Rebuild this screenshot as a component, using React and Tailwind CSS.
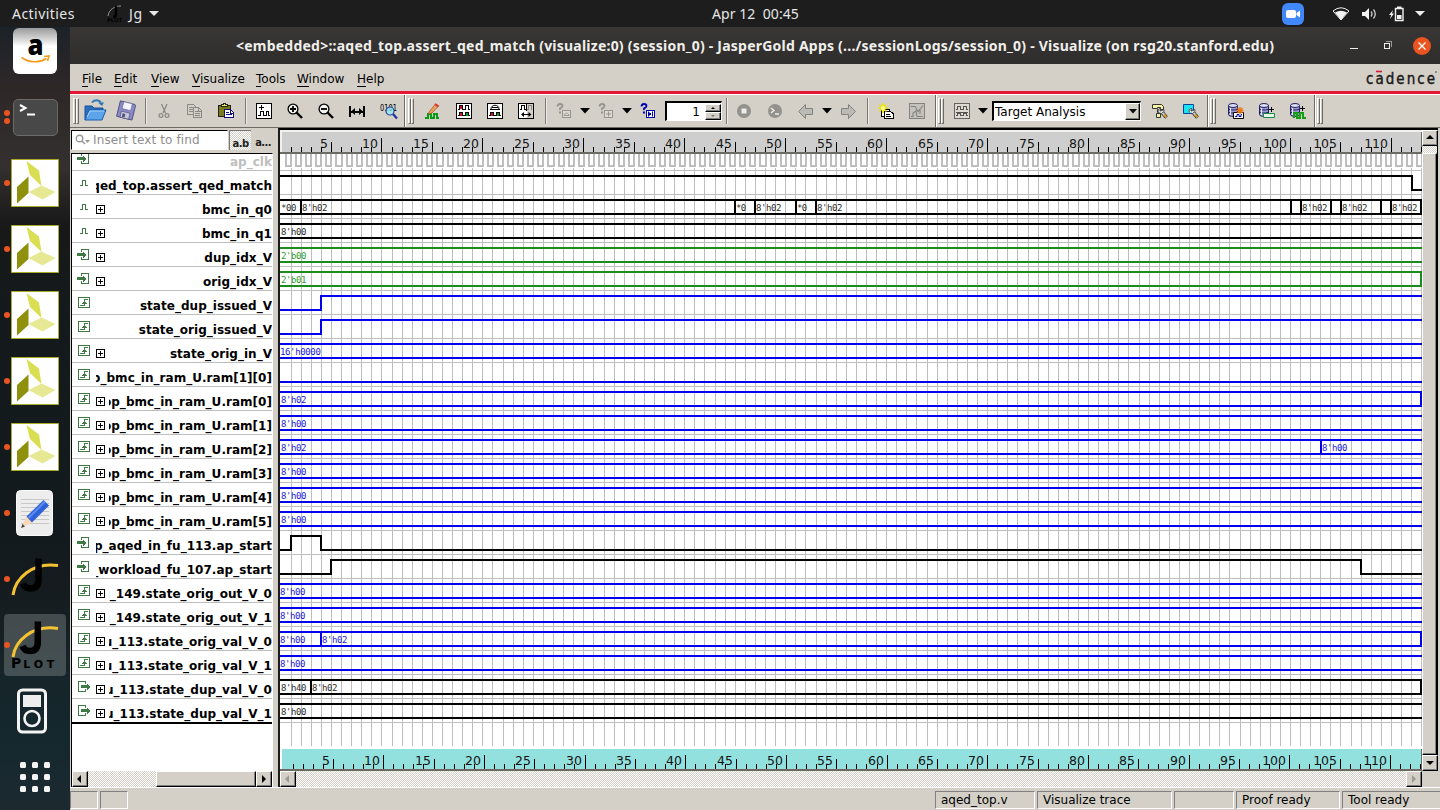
import React from "react";

const INK = { k: "#000000", b: "#0000ee", g: "#1a8c1a" };
const TXT = { k: "#2a2a2a", b: "#2020dd", g: "#2ea02e" };

// kind: bus | bit ; ev: [cycle, label] for buses, [cycle, level] for bits
const SIGNALS = [
  { name: "ap_clk", icon: "in", kind: "clk" },
  { name: "aqed_top.assert_qed_match", icon: "net", kind: "bit", c: "k", ev: [[-1, 1], [112, 0]] },
  { name: "bmc_in_q0", icon: "net", ex: 1, kind: "bus", c: "k", end: 1, ev: [[-1, "*00"], [2, "8'h02"], [45, "*0"], [47, "8'h02"], [51, "*0"], [53, "8'h02"], [100, ""], [101, "8'h02"], [104, ""], [105, "8'h02"], [109, ""], [110, "8'h02"]] },
  { name: "bmc_in_q1", icon: "net", ex: 1, kind: "bus", c: "k", ev: [[-1, "8'h00"]] },
  { name: "dup_idx_V", icon: "in", ex: 1, kind: "bus", c: "g", ev: [[-1, "2'b00"]] },
  { name: "orig_idx_V", icon: "in", ex: 1, kind: "bus", c: "g", end: 1, ev: [[-1, "2'b01"]] },
  { name: "state_dup_issued_V", icon: "reg", kind: "bit", c: "b", ev: [[-1, 0], [4, 1]] },
  { name: "state_orig_issued_V", icon: "reg", kind: "bit", c: "b", ev: [[-1, 0], [4, 1]] },
  { name: "state_orig_in_V", icon: "reg", ex: 1, kind: "bus", c: "b", dx: -1, ev: [[-1, "16'h0000"]] },
  { name: "aqed_top_bmc_in_ram_U.ram[1][0]", icon: "reg", kind: "bit", c: "b", ev: [[-1, 0]] },
  { name: "aqed_top_bmc_in_ram_U.ram[0]", icon: "reg", ex: 1, kind: "bus", c: "b", end: 1, ev: [[-1, "8'h02"]] },
  { name: "aqed_top_bmc_in_ram_U.ram[1]", icon: "reg", ex: 1, kind: "bus", c: "b", ev: [[-1, "8'h00"]] },
  { name: "aqed_top_bmc_in_ram_U.ram[2]", icon: "reg", ex: 1, kind: "bus", c: "b", ev: [[-1, "8'h02"], [103, "8'h00"]] },
  { name: "aqed_top_bmc_in_ram_U.ram[3]", icon: "reg", ex: 1, kind: "bus", c: "b", ev: [[-1, "8'h00"]] },
  { name: "aqed_top_bmc_in_ram_U.ram[4]", icon: "reg", ex: 1, kind: "bus", c: "b", ev: [[-1, "8'h00"]] },
  { name: "aqed_top_bmc_in_ram_U.ram[5]", icon: "reg", ex: 1, kind: "bus", c: "b", ev: [[-1, "8'h00"]] },
  { name: "top_aqed_in_fu_113.ap_start", icon: "in", kind: "bit", c: "k", ev: [[-1, 0], [1, 1], [4, 0]] },
  { name: "grp_workload_fu_107.ap_start", icon: "in", kind: "bit", c: "k", ev: [[-1, 0], [5, 1], [107, 0]] },
  { name: "fu_149.state_orig_out_V_0", icon: "reg", ex: 1, kind: "bus", c: "b", dx: -1, ev: [[-1, "8'h00"]] },
  { name: "fu_149.state_orig_out_V_1", icon: "reg", ex: 1, kind: "bus", c: "b", dx: -1, ev: [[-1, "8'h00"]] },
  { name: "fu_113.state_orig_val_V_0", icon: "reg", ex: 1, kind: "bus", c: "b", dx: -1, end: 1, ev: [[-1, "8'h00"], [4, "8'h02"]] },
  { name: "fu_113.state_orig_val_V_1", icon: "reg", ex: 1, kind: "bus", c: "b", dx: -1, ev: [[-1, "8'h00"]] },
  { name: "fu_113.state_dup_val_V_0", icon: "out", ex: 1, kind: "bus", c: "k", end: 1, ev: [[-1, "8'h40"], [3, "8'h02"]] },
  { name: "fu_113.state_dup_val_V_1", icon: "out", ex: 1, kind: "bus", c: "k", ev: [[-1, "8'h00"]] },
];

const G = (n) => Math.floor(281 + n * 10.095);
const X = (n) => (n < 0 ? 280 : Math.round(281 + n * 10.095 + 0.01));
const CYCLES = Array.from({ length: 113 }, (_, i) => i + 1);

/* ---------- waveform ---------- */

function Wave({ s, i }) {
  if (s.kind === "clk") {
    let d = "M280 153H286";
    for (let n = 0; n < 114; n++) d += `V166H${X(n + 1)}V153H${X(n + 1) + 5}`;
    return <path d={d} stroke="#bebebe" strokeWidth="2" fill="none" />;
  }
  const hi = 176 + 24 * (i - 1);
  const lo = hi + 14;
  const ink = INK[s.c];
  if (s.kind === "bit") {
    let d = "";
    s.ev.forEach(([n, v], k) => {
      const y = v ? hi : lo;
      d += k === 0 ? `M280 ${y}` : `H${X(n)}V${y}`;
    });
    return <path d={d + "H1422"} stroke={ink} strokeWidth="2" fill="none" />;
  }
  let d = `M280 ${hi}H1422M280 ${lo}H1422`;
  s.ev.slice(1).forEach(([n]) => (d += `M${X(n)} ${hi}V${lo}`));
  if (s.end) d += `M1421 ${hi}V${lo}`;
  return (
    <g>
      <path d={d} stroke={ink} strokeWidth="2" fill="none" />
      {s.ev.map(([n, t], k) =>
        t ? (
          <text key={k} x={n < 0 ? 281 + (s.dx || 0) : X(n) + 1} y={hi + 11} fill={TXT[s.c]} textLength={t.length * 5.1} lengthAdjust="spacing"
            className="font-['DejaVu_Sans_Mono',monospace] text-[9px]">{t}</text>
        ) : null
      )}
    </g>
  );
}

function Waves() {
  return (
    <svg width="1142" height="595" viewBox="280 154 1142 595" shapeRendering="crispEdges" className="block bg-white">
      {CYCLES.map((n) => <path key={n} d={`M${G(n) + 0.5} 168V746`} stroke="#bebebe" />)}
      {SIGNALS.map((_, i) => <path key={i} d={`M280 ${170.5 + 24 * i}H1422`} stroke="#bebebe" />)}
      {SIGNALS.map((s, i) => <Wave key={i} s={s} i={i} />)}
    </svg>
  );
}

function Ruler({ bottom }) {
  const x0 = bottom ? 283 : 281;
  const p = bottom ? 10.068 : 10.095;
  const base = bottom ? 769 : 152;
  const top = bottom ? 749 : 132;
  const h = bottom ? 22 : 24;
  const vy = bottom ? 749 : 130;
  return (
    <svg width="1142" height={h} viewBox={`280 ${vy} 1142 ${h}`} shapeRendering="crispEdges" className="block">
      <rect x="280" y={vy} width="1142" height={h} fill={bottom ? "#ffffff" : "#f2f0ec"} />
      <rect x="282" y={top} width="1139" height={base - top} fill={bottom ? "#92e1df" : "#cecece"} />
      <rect x="1421" y={top} width="1" height={base - top} fill="#6b6b64" />
      <rect x="280" y={base} width="1142" height="2" fill="#6b6b64" />
      {CYCLES.map((n) => {
        const x = Math.floor(x0 + n * p) + 0.5;
        const t = n % 10 === 0 ? 14 : n % 5 === 0 ? 10 : 5;
        return (
          <g key={n}>
            <path d={`M${x} ${base}v-${t}`} stroke="#000" />
            {n % 5 === 0 && (
              <text x={x - 3.5} y={base - 4} textAnchor="end" fill="#141414" className="font-['DejaVu_Sans',sans-serif] text-[12.5px]">{n}</text>
            )}
          </g>
        );
      })}
    </svg>
  );
}

/* ---------- signal list ---------- */

function SigIcon({ t }) {
  const g = "#3f7a46";
  return (
    <svg width="14" height="12" viewBox="0 0 14 12" shapeRendering="crispEdges" className="mb-[5px] shrink-0" fill="none" stroke={g}>
      {t === "reg" && (<><path d="M1.5 .5h11v10h-11z" /><path d="M3 8.500h4.500V2.500H11" /><path d="M5 6.500h5M6 5.500h3" /></>)}
      {t === "in" && (<><path d="M4.500 3V.5h7v10h-7V8" /><path d="M0 5.500h7" strokeWidth="3" /><path d="M6.500 2.500v6M7.500 3.500v4M8.500 4.500v2" /></>)}
      {t === "out" && (<><path d="M8.500 3V.5h-7v10h7V8" /><path d="M4 5.500h7" strokeWidth="3" /><path d="M10.500 2.500v6M11.500 3.500v4M12.500 4.500v2" /></>)}
      {t === "net" && <path d="M3 8.500h2.500V3.500h3v5H11" />}
    </svg>
  );
}

function SignalRow({ s, first }) {
  return (
    <div className={(first ? "h-[17px] " : "h-6 ") + "flex shrink-0 items-end overflow-hidden border-b border-[#bebebe] pl-[5px]"}>
      <SigIcon t={s.icon} />
      {s.ex ? (
        <svg width="9" height="9" shapeRendering="crispEdges" className="mb-1 ml-[5px] shrink-0" fill="none" stroke="#000">
          <path d="M.5 .5h8v8h-8zM2 4.500h5M4.500 2v5" />
        </svg>
      ) : null}
      <div className={(s.ex ? "ml-1 " : "ml-[5px] ") + (first ? "text-[#bebebe] " : "text-black ") + "flex h-4 min-w-0 flex-1 justify-end overflow-hidden text-[12px] leading-4 font-bold tracking-[0.03px] whitespace-nowrap"}>
        <span>{s.name}</span>
      </div>
    </div>
  );
}

/* ---------- scrollbars ---------- */

const DITHER = "bg-[repeating-conic-gradient(#ffffff_0_25%,#d4d0c8_0_50%)] bg-[length:2px_2px]";
const RAISED = "bg-[#d4d0c8] border-t border-l border-t-white border-l-white border-r border-b border-r-black border-b-black shadow-[inset_-1px_-1px_0_#808080]";

function Arrow({ dir, off, cls }) {
  const d = { l: "M9 4v8L5 8z", r: "M6 4v8l4-4z", u: "M4 9h8L8 5z", d: "M4 6h8l-4 4z" }[dir];
  return (
    <div className={RAISED + " flex shrink-0 items-center justify-center " + cls}>
      <svg width="16" height="16" viewBox="0 0 16 16" className="shrink-0"><path d={d} fill={off ? "#9a9a94" : "#000"} /></svg>
    </div>
  );
}

/* ---------- toolbar ---------- */

const Cell = ({ children, w = 16, h = 16, vb }) => (
  <div className="flex w-[31px] shrink-0 items-center pl-2">
    <svg width={w} height={h} viewBox={vb || `0 0 ${w} ${h}`} fill="none" className={w === 24 ? "-ml-1 shrink-0" : "shrink-0"}>{children}</svg>
  </div>
);
const Caret = () => (
  <div className="flex w-[11px] shrink-0 items-center justify-center pb-px">
    <svg width="10" height="6"><path d="M0 0h10L5 5.500z" fill="#000" /></svg>
  </div>
);
const Sep = () => (
  <div className="flex w-[7px] shrink-0 items-center justify-end pr-px">
    <div className="h-[26px] w-[2px] border-l border-l-[#7c7a74] bg-white/60" />
  </div>
);
const Handle = ({ cls }) => (
  <div className={"flex shrink-0 items-center " + cls}>
    <div className="h-[26px] w-[3px] border-t border-r border-b border-l border-t-white border-r-[#6b6b64] border-b-[#6b6b64] border-l-white bg-[#d4d0c8]" />
    <div className="h-[26px] w-[3px] border-t border-r border-b border-l border-t-white border-r-[#6b6b64] border-b-[#6b6b64] border-l-white bg-[#d4d0c8]" />
  </div>
);
const Group = ({ children, last }) => (
  <div className={"flex h-full items-stretch " + (last ? "flex-1" : "shrink-0 border-r border-r-[#6b6b64] shadow-[1px_0_0_#ffffff]")}>{children}</div>
);

const Frame = ({ f = "#fff", s = "#000" }) => <path d="M.5 .5h15v15H.5z" fill={f} stroke={s} shapeRendering="crispEdges" />;
const Lens = ({ plus }) => (
  <>
    <circle cx="6" cy="6" r="4.900" fill="#f4f4ee" stroke="#000" strokeWidth="1.300" />
    <path d="M9.500 9.500l5.500 5.500" stroke="#000" strokeWidth="2.400" />
    <path d={plus ? "M3 6h6M6 3v6" : "M3 6h6"} stroke="#000" strokeWidth="1.800" />
  </>
);
const Query = ({ c, f, mark }) => (
  <>
    <path d="M1.500 3.500Q1.500 1 4 1T6.500 3Q6.500 4.200 5 4.800T4 7" stroke={c} strokeWidth="1.800" />
    <path d="M3 8.500h2v2H3z" fill={c} />
    <path d="M6.500 7.500h8v7h-8z" fill={f} stroke={c} shapeRendering="crispEdges" />
    <path d={mark} stroke={c} />
  </>
);
const Db = () => (
  <>
    <path d="M.5 2.500v9c0 2.500 9 2.500 9 0v-9z" fill="#9a9ad8" stroke="#20205a" />
    <ellipse cx="5" cy="2.500" rx="4.500" ry="2" fill="#dcdcf4" stroke="#20205a" />
    <path d="M.5 5.500c0 2 9 2 9 0M.5 8.500c0 2 9 2 9 0" stroke="#20205a" />
    <path d="M2.500 5v7" stroke="#e8e8fa" />
  </>
);
const Wrench = () => (
  <>
    <path d="M8.500 7.500l6 7" stroke="#333" strokeWidth="3.600" />
    <path d="M8.500 7.500l4 4.500" stroke="#d0d0d0" strokeWidth="2" />
    <path d="M12 11.500l2.300 2.700" stroke="#e0a030" strokeWidth="2.200" />
    <path d="M6.500 9.500Q5 6 8.500 5.500L8 8l2-.5 2-1q1 2.500-2 3.500" fill="#e4e4e4" stroke="#333" strokeWidth=".8" />
  </>
);

function Toolbar() {
  return (
    <div className="flex h-[33px] shrink-0 border-t border-t-white bg-[#d4d0c8]">
      <Group>
        <Handle cls="w-[9px] pl-[3px]" />
        <Cell w={24} h={24}>
          <path d="M2 21V7h7l2 2h9v4" fill="#2a6fc0" stroke="#1a4f94" />
          <path d="M2 21L6 11h17l-4 10z" fill="#5ba4ea" stroke="#1c5caa" />
          <path d="M4 18l3-6h14" stroke="#a8d4fa" />
          <path d="M9 3.500c2-3 7-3 9 0" stroke="#2a74b8" strokeWidth="1.800" />
          <path d="M15 3.500h6l-2 3.500z" fill="#2a74b8" />
        </Cell>
        <Cell w={24} h={24}>
          <g transform="translate(1.500 1) rotate(14 11 11) scale(.88)">
            <path d="M3 3h17l1 1v17H3z" fill="#8a8ac4" stroke="#4c4c80" />
            <path d="M7 3h10v8H7z" fill="#f4f4fb" stroke="#6a6a9c" strokeWidth=".7" />
            <path d="M7 14h10v7H7z" fill="#c8c8d8" stroke="#4c4c80" strokeWidth=".7" />
            <path d="M9 16h3v4H9z" fill="#4c4c80" />
          </g>
        </Cell>
        <Sep />
        <Cell><path d="M5.500 1l4 9M11 1l-4 9" stroke="#8a8a84" strokeWidth="1.300" /><circle cx="5" cy="12.500" r="1.900" stroke="#8a8a84" strokeWidth="1.200" /><circle cx="11" cy="12.500" r="1.900" stroke="#8a8a84" strokeWidth="1.200" /></Cell>
        <Cell><g shapeRendering="crispEdges" stroke="#8a8a84"><path d="M.5 1.500h6l3 3v7h-9zM2 4.500h4M2 6.500h4M2 8.500h4" /><path d="M6.500 4.500h5l3 3v7h-8z" fill="#d4d0c8" /><path d="M8 8.500h3M8 10.500h5M8 12.500h5M11.500 5v3h3" /></g></Cell>
        <Cell><g shapeRendering="crispEdges"><path d="M.5 2.500h12v11H.5z" fill="#7a7a18" stroke="#222" /><path d="M3.500 3.500v-2h2v-1h2v1h2v2z" fill="#f0f060" stroke="#222" /><path d="M6.500 6.500h6l3 3v5h-9z" fill="#fff" stroke="#10107a" /><path d="M8 9.500h3M8 11.500h6M12.500 7v3h3" stroke="#10107a" /></g></Cell>
        <Sep />
        <Cell><Frame /><path d="M3 4.500h5M5.500 2v5M2 12.500h2.500v-4h3v4h3v-4h2v4H14" stroke="#000" shapeRendering="crispEdges" /></Cell>
        <Cell><Lens plus /></Cell>
        <Cell><Lens /></Cell>
        <Cell><path d="M1 3v11M15 3v11M2 8.500h12" stroke="#000" strokeWidth="2" shapeRendering="crispEdges" /><path d="M6 5L2 8.500 6 12zM10 5l4 3.500-4 3.500z" fill="#000" /></Cell>
        <Cell w={18} h={18}>
          <text x="0" y="9" textLength="17" lengthAdjust="spacingAndGlyphs" fill="#000" className="font-['DejaVu_Sans',sans-serif] text-[9.5px]">0101</text>
          <circle cx="10" cy="9" r="4" fill="#8ff0f8" fillOpacity=".7" stroke="#2848a8" strokeWidth="1.200" />
          <path d="M13 12l4 4.500" stroke="#2030a0" strokeWidth="2.200" />
        </Cell>
        <div className="w-px" />
      </Group>
      <Group>
        <Handle cls="w-[12px] pl-[3px]" />
        <Cell><path d="M0 14.500h3v-4h3v4h3v-4h3v4h2" stroke="#0a9a1a" strokeWidth="2" shapeRendering="crispEdges" /><path d="M4 9l6.500-8 3 2L7 10l-3.500 1z" fill="#e8a05a" stroke="#a85a2a" strokeWidth=".8" /><path d="M10 1l3.500 2.500" stroke="#e03030" strokeWidth="2" /></Cell>
        <Cell><Frame /><g shapeRendering="crispEdges"><path d="M3 3h4v3H3z" fill="#d01020" /><path d="M2 6.500h1.500v-4h3v4h3v-4h3v4H14" stroke="#000" /><path d="M3 10h3v3H3z" fill="#d01020" /><path d="M9 10h4v3H9z" fill="#0a9a1a" /><path d="M2 12.500h1.500v-3h3v3h3v-3h3v3H14" stroke="#000" /></g></Cell>
        <Cell><Frame /><path d="M3 6.500h10M4 6c0-5 8-5 8 0M5 4.500h6" stroke="#000" /><g shapeRendering="crispEdges"><path d="M3 10h3v3H3z" fill="#d01020" /><path d="M9 10h4v3H9z" fill="#0a9a1a" /><path d="M2 12.500h1.500v-3h3v3h3v-3h3v3H14" stroke="#000" /></g></Cell>
        <Cell><Frame /><g shapeRendering="crispEdges"><path d="M9 1h6v14H9z" fill="#d4d0c8" /><path d="M2 6.500h1.500v-4h3v4h2" stroke="#000" /><path d="M9 6.500h1.500v-4h3v4" stroke="#888" /><path d="M8.500 0v8" stroke="#000" /><path d="M4 11.500h8" stroke="#000" /></g><path d="M6 9L3 11.500 6 14zM10.500 9l3 2.500-3 2.500z" fill="#000" /></Cell>
        <Sep />
        <Cell><Query c="#96948e" f="#dedad2" mark="M8 12.500c0-3 5-3 5 0z" /></Cell>
        <Caret />
        <Cell><Query c="#96948e" f="#dedad2" mark="M10.500 8.500v5M8 11h5" /></Cell>
        <Caret />
        <Cell><Query c="#0000b0" f="#fff" mark="M8.500 8.500v5M9.500 9.500v3M10.500 10v2M12.500 8.500v5" /></Cell>
        <div className="ml-[2px] flex h-5 w-[57px] shrink-0 items-center self-center border-t-2 border-r border-b border-l-2 border-t-black border-r-white border-b-white border-l-black bg-white">
          <div className="flex-1 pr-[5px] text-right text-[12px] leading-4">1</div>
          <div className="flex w-4 shrink-0 flex-col">
            <div className={RAISED + " flex h-2 items-center justify-center"}><svg width="4" height="2"><path d="M0 2h4L2 0z" /></svg></div>
            <div className={RAISED + " flex h-2 items-center justify-center"}><svg width="4" height="2"><path d="M0 0h4L2 2z" fill="#777" /></svg></div>
          </div>
        </div>
        <Sep />
        <div className="-ml-px" />
        <Cell><circle cx="8" cy="8" r="7" fill="#94928c" /><path d="M5.500 5.500h5v5h-5z" fill="#f0eee8" /></Cell>
        <Cell><circle cx="8" cy="8" r="7" fill="#94928c" /><path d="M4 5l3 2.500L4 10M8 11h4" stroke="#f0eee8" strokeWidth="1.400" /></Cell>
        <Cell><path d="M.5 8.500L7.500 1.500v4h7v6h-7V15.500z" fill="#bcbab4" stroke="#85837d" /></Cell>
        <Caret />
        <Cell><path d="M15.500 8.500l-7-7v4h-7v6h7v4z" fill="#bcbab4" stroke="#85837d" /></Cell>
        <Sep />
        <Cell><g shapeRendering="crispEdges"><path d="M3.500 6.500h8v7h-8z" fill="#fff" stroke="#000" /><path d="M6.500 8.500h6l2.500 2v5H6.500z" fill="#fff" stroke="#000" /><path d="M8 11.500h4M8 13.500h5" stroke="#000" /></g><path d="M5 0v10M0 5h10M1.500 1.500l7 7M8.500 1.500l-7 7" stroke="#e8e010" strokeWidth="1.600" /><circle cx="5" cy="5" r="2" fill="#ffff80" /></Cell>
        <Cell><Frame f="#c4c2bc" s="#85837d" /><path d="M2 13.500h2V10l3-2 1 5.500h6M2 3.500h4l3 5 5-6M11 7v4" stroke="#85837d" strokeWidth="1.100" /></Cell>
        <div className="w-[3px]" />
      </Group>
      <Group>
        <Handle cls="w-[10px] pl-[2px]" />
        <Cell><Frame f="#dedad2" s="#66645e" /><path d="M2 6.500h1.500v-3h3v3h3v-3h3v3H14M2 9.500h12M2 12.500h1.500v-2h3v2h3v-2h3v2H14" stroke="#55534e" shapeRendering="crispEdges" /></Cell>
        <Caret />
        <div className="ml-[4px] flex h-5 w-[149px] shrink-0 items-center self-center border-t-2 border-r border-b border-l-2 border-t-black border-r-white border-b-white border-l-black bg-white">
          <div className="flex-1 pl-px text-[12px] leading-4 whitespace-nowrap">Target Analysis</div>
          <div className={RAISED + " flex h-[17px] w-[15px] items-center justify-center"}><svg width="8" height="5"><path d="M0 0h8L4 4.500z" /></svg></div>
        </div>
        <div className="w-[3px]" />
        <Cell><path d="M.5 1.500h9l2 2v3h-3v3h-3v-3h3v-2h-3v1h-5z" fill="#f4f4a0" stroke="#333" /><path d="M4.500 10.500h4v4h-4z" fill="#f4f4a0" stroke="#333" /><Wrench /></Cell>
        <Cell><path d="M.5 1.500h10v9H.5z" fill="#18e4f0" stroke="#1040a0" /><Wrench /></Cell>
        <div className="w-px" />
      </Group>
      <Group>
        <Handle cls="w-[12px] pl-[2px]" />
        <Cell><Db /><path d="M5.500 9.500h10v6h-10z" fill="#fff" stroke="#000" /><path d="M7 13.500h2v-2h2v2h2v-2h1" stroke="#0000a0" /><path d="M12 4v7M8.500 7.500h7M9.500 5l5 5M14.500 5l-5 5" stroke="#f07810" strokeWidth="1.300" /></Cell>
        <Cell><Db /><path d="M4.500 10.500h11v4h-11z" fill="#e4f8e4" stroke="#1a8c4a" /><path d="M12.500 4v5M10 6.500h5" stroke="#000" /></Cell>
        <Cell><Db /><path d="M4 15v-5h3v5h3v-5h3v5h3" stroke="#10a010" strokeWidth="2" shapeRendering="crispEdges" /><path d="M12.500 3v5M10 5.500h5" stroke="#000" /></Cell>
        <div className="w-px" />
      </Group>
      <Group last>
        <Handle cls="w-[12px] pl-[2px]" />
      </Group>
    </div>
  );
}

/* ---------- dock ---------- */

const DockItem = ({ children, dots = 0, active }) => (
  <div className="relative flex h-[66px] shrink-0 items-center justify-center">
    <div className={(active ? "bg-white/20 " : "") + "flex h-[62px] w-[62px] items-center justify-center rounded"}>{children}</div>
    <div className="absolute top-0 left-1 flex h-full flex-col justify-center gap-[2px]">
      {Array.from({ length: dots }, (_, i) => <div key={i} className="h-[6px] w-[6px] rounded-full bg-[#e95420]" />)}
    </div>
  </div>
);
const Xilinx = () => (
  <svg width="48" height="48" viewBox="0 0 48 48">
    <path d="M.5 .5h47v47H.5z" fill="#fff" stroke="#a8aa28" />
    <path d="M15.500 2L28 11.500 30.500 27 19 16z" fill="#dade52" />
    <path d="M6 28L17.500 17.500V34L6 44.500z" fill="#8f900c" />
    <path d="M17.500 33L30.500 26.500 44.500 33 31.500 40.500z" fill="#e6e894" />
  </svg>
);
const Jasper = ({ plot }) => (
  <svg width="50" height="50" viewBox="0 -1 50 50">
    <path d={plot ? "M3 36C5 20 22 3.500 48 7.500" : "M3 40C5 24 22 6.500 48 10.500"} stroke="#f4c230" strokeWidth="3" fill="none" />
    <path d={plot ? "M27.800 .5V21Q27.800 30 20 30Q14.500 30 12.500 25" : "M28.500 3.500V24.500Q28.500 33.500 20.500 33.500Q15 33.500 13 28.500"} stroke="#000" strokeWidth="6.500" fill="none" />
    {plot && (
      <text x="1" y="47" fill="#000" className="font-['DejaVu_Sans',sans-serif] text-[11px] font-bold tracking-[3.8px]">
        <tspan className="text-[14px] tracking-[2px]">P</tspan>LOT
      </text>
    )}
  </svg>
);

function Dock() {
  return (
    <div className="flex w-[70px] shrink-0 flex-col overflow-hidden bg-[linear-gradient(180deg,#1c2229_0px,#2e2728_60px,#33302f_140px,#181818_200px,#141a1c_280px,#131a1d_500px,#151b1e_560px,#162428_640px,#14282e_710px,#1c2a30_783px)]">
      <div className="-mt-[9px] flex flex-col">
        <DockItem>
          <div className="flex h-[46px] w-11 flex-col items-center rounded-md bg-linear-to-b from-[#9a9a9a] via-white via-40% to-white">
            <svg width="44" height="46">
              <text x="14.500" y="27" fill="#000" textLength="16" lengthAdjust="spacingAndGlyphs" className="font-['Open_Sans',sans-serif] text-[29px] font-extrabold">a</text>
              <path d="M8.500 29.500c8 5.500 18 5.500 25 1M31 28.500l5-.5-1.500 5" stroke="#f59a1c" strokeWidth="1.600" fill="none" />
            </svg>
          </div>
        </DockItem>
        <DockItem dots={2}>
          <div className="h-[37px] w-[45px] rounded-[5px] border border-[#6a6a6a] bg-[#484848]">
            <svg width="40" height="30"><path d="M6 5l5.500 3L6 11M13 14.500h8" stroke="#fff" strokeWidth="2" fill="none" /></svg>
          </div>
        </DockItem>
        {[0, 1, 2, 3, 4].map((i) => <DockItem key={i} dots={1}><Xilinx /></DockItem>)}
        <DockItem dots={1}>
          <svg width="38" height="46">
            <rect x=".5" y=".5" width="36" height="45" rx="4" fill="#ededed" stroke="#fafafa" />
            <path d="M5 9.500h28M5 13.500h28M5 17.500h28M5 21.500h28M5 25.500h28M5 29.500h28M5 33.500h28" stroke="#c8c8c8" />
            <path d="M5 38l5.500-11.500 6 6z" fill="#f8d8b8" /><path d="M5 38l1.500-4 2.500 2.500z" fill="#444" />
            <path d="M10.500 26.500L27.500 10 33 15.500 16 32.500z" fill="#2f62d8" /><path d="M12.500 28L29 11.500" stroke="#5f8cf0" strokeWidth="2" />
          </svg>
        </DockItem>
        <DockItem dots={1}><Jasper /></DockItem>
        <DockItem dots={1} active><Jasper plot /></DockItem>
        <DockItem>
          <svg width="32" height="46" className="-ml-[6px]" fill="none">
            <rect x="2.500" y="2" width="27" height="42" rx="4" stroke="#f4f4f4" strokeWidth="3" />
            <path d="M7 7h18v12H7z" fill="#eee" /><circle cx="16" cy="30.500" r="7.500" stroke="#f4f4f4" strokeWidth="2.600" />
          </svg>
        </DockItem>
        <DockItem>
          <svg width="30" height="30" fill="#f4f4f4">
            {[0, 12, 24].map((y) => [0, 12, 24].map((x) => <rect key={x + "-" + y} x={x} y={y} width="6" height="6" rx="1.500" />))}
          </svg>
        </DockItem>
      </div>
    </div>
  );
}

/* ---------- shell ---------- */

function TopBar() {
  return (
    <div className="flex h-[27px] shrink-0 items-center bg-[#1d1d1d] font-['Noto_Sans',sans-serif] text-[14px] text-[#e6e6e6]">
      <div className="w-[107px] pl-3 tracking-[0.45px]">Activities</div>
      <svg width="16" height="18" fill="none">
        <path d="M1 11C2 4 8 1 14 1" stroke="#9a9a9a" /><path d="M9 1v8q0 3-3 3" stroke="#000" strokeWidth="2.500" />
        <text x="0" y="17" textLength="15" lengthAdjust="spacingAndGlyphs" fill="#000" className="font-['DejaVu_Sans',sans-serif] text-[5px] font-bold">PLOT</text>
      </svg>
      <div className="w-[26px] pl-[6px] tracking-[0.6px]">Jg</div>
      <svg width="10" height="6"><path d="M0 0h10L5 5z" fill="#e6e6e6" /></svg>
      <div className="w-[553px]" />
      <div className="w-[570px] tracking-[0.06px] whitespace-pre">Apr 12  00:45</div>
      <svg width="22" height="22"><rect width="22" height="22" rx="6" fill="#4088fb" /><rect x="4" y="7" width="10" height="8" rx="2" fill="#fff" /><path d="M14.500 10l3.500-2.500v7L14.500 12z" fill="#fff" /></svg>
      <div className="w-[29px]" />
      <svg width="16" height="14"><path d="M0 4Q8-2.500 16 4L8 13z" fill="none" stroke="#eee" strokeWidth="1" /><path d="M2 5.500Q8 2 14 5.500L8 13z" fill="#f2f2f2" /></svg>
      <svg width="16" height="14" className="ml-3"><path d="M1 5h3l4-4v12L4 9H1z" fill="#f2f2f2" /><path d="M10 4.500q2 2.500 0 5M12.500 2.500q3.500 4.500 0 9" stroke="#ccc" strokeWidth="1.300" fill="none" /></svg>
      <svg width="16" height="16" className="ml-3"><path d="M4 4L0 9h2.200L1 13l4-5.500H3z" fill="#f2f2f2" /><path d="M6.500 2.500h7.500v12H6.500z" stroke="#f2f2f2" strokeWidth="1.400" fill="none" /><path d="M8 .5h4.500v2H8zM8 9h4.500v4H8z" fill="#f2f2f2" /></svg>
      <svg width="10" height="6" className="ml-[10px]"><path d="M0 0h10L5 5z" fill="#eee" /></svg>
    </div>
  );
}

const MENU = [["File", "w-8"], ["Edit", "w-[37px]"], ["View", "w-[41px]"], ["Visualize", "w-16"], ["Tools", "w-[41px]"], ["Window", "w-[60px]"], ["Help", "w-10"]];

const StatusBox = ({ cls, children }) => (
  <div className={"h-[18px] shrink-0 border-t border-r border-b border-l border-t-[#808080] border-r-white border-b-white border-l-[#808080] text-[12px] leading-[17px] whitespace-nowrap " + cls}>{children}</div>
);

export default function App() {
  return (
    <div className="flex h-[810px] w-[1440px] flex-col overflow-hidden bg-[#d4d0c8] font-['DejaVu_Sans',sans-serif] text-black">
      <TopBar />
      <div className="flex min-h-0 flex-1">
        <Dock />
        <div className="flex min-w-0 flex-1 flex-col">
          <div className="flex h-[37px] shrink-0 items-center bg-linear-to-b from-[#393735] to-[#2f2d2c] font-['Noto_Sans',sans-serif]">
            <div className="w-[1280px] shrink-0 pl-[166px] text-[14px] font-bold tracking-[0.226px] whitespace-nowrap text-[#f0efec]">&lt;embedded&gt;::aqed_top.assert_qed_match (visualize:0) (session_0) - JasperGold Apps (.../sessionLogs/session_0) - Visualize (on rsg20.stanford.edu)</div>
            <svg width="10" height="10" shapeRendering="crispEdges"><path d="M0 7.500h8" stroke="#eee" /></svg>
            <svg width="10" height="10" className="ml-[23px]" shapeRendering="crispEdges" fill="none"><path d="M3 .5h5.500v5.500" stroke="#999" /><path d="M1.500 2.500h5v5h-5z" stroke="#eee" /></svg>
            <svg width="18" height="18" className="ml-5"><circle cx="9" cy="9" r="9" fill="#e95420" /><path d="M5.500 5.500l7 7M12.500 5.500l-7 7" stroke="#fff" strokeWidth="1.300" /></svg>
          </div>
          <div className="flex h-[27px] shrink-0 items-center pl-3 text-[12px]">
            {MENU.map(([t, w]) => (
              <div key={t} className={w + " shrink-0 pt-[2px]"}><span className="border-b border-black">{t[0]}</span>{t.slice(1)}</div>
            ))}
            <svg width="76" height="22" className="ml-[968px]">
              <text x="1" y="17" textLength="69" lengthAdjust="spacing" fill="#1a1a1a" stroke="#1a1a1a" strokeWidth=".4" className="font-['DejaVu_Sans_Condensed','DejaVu_Sans',sans-serif] text-[15px]">cadence</text>
              <path d="M11 4.500h6" stroke="#d81838" strokeWidth="1.600" />
              <circle cx="71" cy="5" r="1" fill="#777" />
            </svg>
          </div>
          <div className="h-[3px] shrink-0 bg-[#e31735]" />
          <Toolbar />
          <div className="h-px shrink-0 bg-[#6b6b64]" />
          <div className="flex h-[659px] shrink-0">
            <div className="flex w-[208px] shrink-0 flex-col">
              <div className="flex h-[25px] items-start pt-[2px] pl-px">
                <div className="flex h-[20px] w-[157px] items-center border-t border-r border-b border-l border-t-black border-r-white border-b-white border-l-black bg-white pl-[3px]">
                  <svg width="16" height="12" fill="none"><circle cx="4.500" cy="4.500" r="3.300" stroke="#999" strokeWidth="1.400" /><path d="M7 7l3 3" stroke="#999" strokeWidth="1.500" /><path d="M10 6h5l-2.500 3z" fill="#999" /></svg>
                  <div className="ml-[2px] text-[12px] leading-4 tracking-[0.12px] whitespace-nowrap text-[#8e8e8e]">Insert text to find</div>
                </div>
                <div className={DITHER + " ml-px flex h-5 w-[22px] items-end justify-center border-t border-l border-[#777] text-[10px] leading-3 font-bold text-[#222]"}><span className="tracking-[-0.5px]">a.b</span></div>
                <div className="flex h-5 w-[24px] items-end justify-center pb-px text-[10px] leading-3 font-bold tracking-[-0.6px] text-[#222]">a...</div>
              </div>
              <div className="ml-px flex h-[634px] w-[202px] flex-col border-t border-r border-l border-t-black border-r-white border-l-black bg-white">
                {SIGNALS.map((s, i) => <SignalRow key={i} s={s} first={i === 0} />)}
                <div className="-mt-px h-[2px] shrink-0 bg-black" />
                <div className="flex-1" />
                <div className={DITHER + " flex h-4 shrink-0"}>
                  <Arrow dir="l" cls="h-4 w-4" />
                  <div className="flex-1" />
                  <div className={RAISED + " h-4 w-[100px]"} />
                  <Arrow dir="r" cls="h-4 w-4" />
                </div>
              </div>
            </div>
            <div className="flex w-[1160px] shrink-0 flex-col border-t-2 border-l-2 border-t-black border-l-[#1c1c1a]">
              <div className="flex">
                <div className="flex w-[1142px] shrink-0 flex-col">
                  <Ruler />
                  <Waves />
                  <Ruler bottom />
                </div>
                <div className={DITHER + " flex w-4 flex-col border-r border-r-black"}>
                  <Arrow dir="u" cls="h-4 w-4" />
                  <div className="h-[7px]" />
                  <div className={RAISED + " flex-1"} />
                  <Arrow dir="d" cls="h-4 w-4" />
                </div>
              </div>
              <div className={DITHER + " flex h-4 w-[1142px] shrink-0 justify-between"}>
                <Arrow dir="l" off cls="h-4 w-4" />
                <Arrow dir="r" off cls="h-4 w-4" />
              </div>
            </div>
          </div>
          <div className="flex flex-1 items-start border-t border-t-white pt-[3px]">
            <StatusBox cls="w-7" />
            <StatusBox cls="ml-[2px] w-7" />
            <div className="w-[807px] shrink-0" />
            <StatusBox cls="w-[100px] pl-[5px]">aqed_top.v</StatusBox>
            <StatusBox cls="ml-[2px] w-[135px] pl-[5px]">Visualize trace</StatusBox>
            <StatusBox cls="ml-[2px] w-[60px]" />
            <StatusBox cls="ml-[2px] w-[104px] pl-[5px]">Proof ready</StatusBox>
            <StatusBox cls="ml-[2px] w-[104px] pl-[5px]">Tool ready</StatusBox>
          </div>
        </div>
      </div>
    </div>
  );
}
